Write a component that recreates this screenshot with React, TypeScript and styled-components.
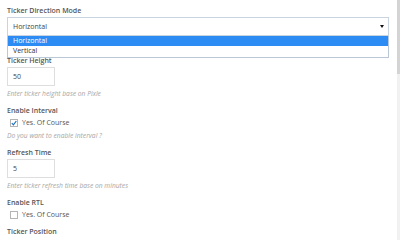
import React from 'react';
import styled, { createGlobalStyle } from 'styled-components';

const GlobalStyle = createGlobalStyle`
    html, body {
        margin: 0;
        padding: 0;
        background: #fff;
        overflow: hidden;
    }
    body {
        font-family: "Open Sans", "Liberation Sans", sans-serif;
    }
`;

const Page = styled.div`
    display: flex;
    width: 400px;
    height: 240px;
    overflow: hidden;
`;
const Form = styled.div`
    flex: 1;
    display: flex;
    flex-direction: column;
    padding: 6px 8px 0 7px;
`;
const ScrollTrack = styled.div`
    width: 3px;
    background: #f1f1f1;
    display: flex;
    flex-direction: column;
`;
const ScrollThumb = styled.div`
    height: 74px;
    background: #d4d4d4;
`;
const Field = styled.div<{ $gap?: number }>`
    display: flex;
    flex-direction: column;
    align-items: flex-start;
    margin-bottom: ${p => p.$gap ?? 7}px;
    position: relative;
`;
const Label = styled.div`
    font-size: 7px;
    font-weight: 600;
    color: #555;
    line-height: 10px;
    margin-bottom: 1px;
`;
const SelectBox = styled.div`
    position: relative;
    box-sizing: border-box;
    width: 100%;
    height: 19px;
    border: 1px solid #c9d4e0;
    background: #fff;
    display: flex;
    align-items: center;
    padding-left: 5px;
    font-size: 7px;
    color: #444;
`;
const Caret = styled.span`
    position: absolute;
    right: 4px;
    top: 7px;
    width: 0;
    height: 0;
    border-left: 2px solid transparent;
    border-right: 2px solid transparent;
    border-top: 3px solid #111;
`;
const OptionList = styled.div`
    position: absolute;
    left: 0;
    right: 0;
    top: 30px;
    box-sizing: border-box;
    border: 1px solid #b9c7d6;
    border-top: none;
    background: #fff;
    padding-bottom: 1px;
    z-index: 2;
`;
const Option = styled.div<{ $active?: boolean }>`
    height: 10px;
    line-height: 10px;
    padding-left: 5px;
    font-size: 7px;
    background: ${p => (p.$active ? '#2c8cf4' : '#fff')};
    color: ${p => (p.$active ? '#fff' : '#333')};
`;
const TextInput = styled.div`
    box-sizing: border-box;
    width: 48px;
    height: 19px;
    border: 1px solid #dedede;
    display: flex;
    align-items: center;
    padding-left: 5px;
    font-size: 7px;
    color: #444;
`;
const Help = styled.div`
    font-size: 6.7px;
    font-style: italic;
    color: #a6a6a6;
    line-height: 10px;
    margin-top: 3px;
`;
const CheckRow = styled.label`
    display: flex;
    align-items: center;
    gap: 4px;
    margin-left: 3px;
    font-size: 7px;
    color: #555;
    line-height: 11px;
`;
const Box = styled.span`
    box-sizing: border-box;
    width: 8px;
    height: 8px;
    border: 1px solid #b4b4b4;
    background: #fff;
    display: flex;
    align-items: center;
    justify-content: center;
`;

const Check: React.FC<{ checked?: boolean; text: string }> = ({ checked, text }) => (
    <CheckRow>
        <Box>
            {checked && (
                <svg width="6" height="6" viewBox="0 0 6 6">
                    <path d="M0.8 3.2 L2.4 4.8 L5.3 1" stroke="#1e6fc0" strokeWidth="1.2" fill="none" />
                </svg>
            )}
        </Box>
        {text}
    </CheckRow>
);

export default function App() {
    return (
        <Page>
            <GlobalStyle />
            <Form>
                <Field $gap={20}>
                    <Label>Ticker Direction Mode</Label>
                    <SelectBox>
                        Horizontal
                        <Caret />
                    </SelectBox>
                    <OptionList>
                        <Option $active>Horizontal</Option>
                        <Option>Vertical</Option>
                    </OptionList>
                </Field>
                <Field>
                    <Label>Ticker Height</Label>
                    <TextInput>50</TextInput>
                    <Help>Enter ticker height base on Pixle</Help>
                </Field>
                <Field>
                    <Label>Enable Interval</Label>
                    <Check checked text="Yes. Of Course" />
                    <Help>Do you want to enable interval ?</Help>
                </Field>
                <Field>
                    <Label>Refresh Time</Label>
                    <TextInput>5</TextInput>
                    <Help>Enter ticker refresh time base on minutes</Help>
                </Field>
                <Field>
                    <Label>Enable RTL</Label>
                    <Check text="Yes. Of Course" />
                </Field>
                <Field>
                    <Label>Ticker Position</Label>
                </Field>
            </Form>
            <ScrollTrack>
                <ScrollThumb />
            </ScrollTrack>
        </Page>
    );
}
